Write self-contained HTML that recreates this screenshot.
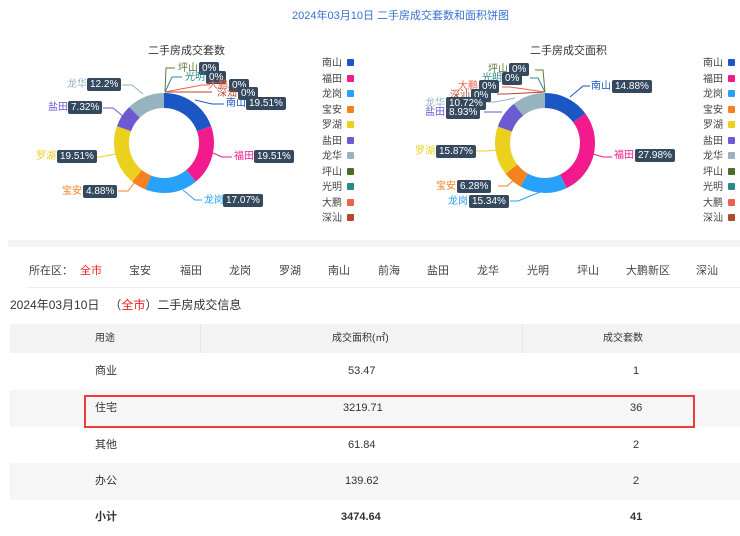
<!DOCTYPE html>
<html><head><meta charset="utf-8"><style>
*{margin:0;padding:0;box-sizing:border-box}
body{width:740px;height:527px;overflow:hidden;background:#fff;font-family:"Liberation Sans","Noto Sans CJK SC",sans-serif;position:relative;color:#333}
.a{position:absolute;white-space:nowrap}
.t{font-size:10px}
.b{position:absolute;background:#34495e;color:#fff;font-size:10px;line-height:13px;padding:0 3px;border-radius:2px;white-space:nowrap}
.l{position:absolute;font-size:10px;line-height:13px;white-space:nowrap}
.lg{position:absolute;font-size:10px;color:#444;line-height:12px}
.lg span{display:inline-block;width:7px;height:7px;border-radius:1px;margin-left:5px;vertical-align:0}
.row{position:absolute;left:10px;width:730px;height:37px;font-size:11px;line-height:37px;color:#333}
.row div{position:absolute;top:0}
</style></head><body>
<div class="a" style="left:292px;top:7px;font-size:11px;color:#3a6fd0">2024年03月10日 二手房成交套数和面积饼图</div>
<div class="a" style="left:148px;top:42px;font-size:11px;color:#333">二手房成交套数</div>
<div class="a" style="left:530px;top:42px;font-size:11px;color:#333">二手房成交面积</div>

<svg class="a" style="left:0;top:0" width="740" height="240">
<g transform="translate(164,143) rotate(-90)" fill="none" stroke-width="15">
<circle r="42.5" pathLength="100" stroke="#1a56c4" stroke-dasharray="19.51 100" stroke-dashoffset="0"/>
<circle r="42.5" pathLength="100" stroke="#f21a8c" stroke-dasharray="19.51 100" stroke-dashoffset="-19.51"/>
<circle r="42.5" pathLength="100" stroke="#27a1fa" stroke-dasharray="17.07 100" stroke-dashoffset="-39.02"/>
<circle r="42.5" pathLength="100" stroke="#f5821f" stroke-dasharray="4.88 100" stroke-dashoffset="-56.09"/>
<circle r="42.5" pathLength="100" stroke="#ecd01e" stroke-dasharray="19.51 100" stroke-dashoffset="-60.97"/>
<circle r="42.5" pathLength="100" stroke="#6c5bd0" stroke-dasharray="7.32 100" stroke-dashoffset="-80.48"/>
<circle r="42.5" pathLength="100" stroke="#97b3bf" stroke-dasharray="12.2 100" stroke-dashoffset="-87.8"/>
</g>
<g transform="translate(175,143) rotate(-90)" fill="none" stroke-width="15">
</g>
<g transform="translate(545,143) rotate(-90)" fill="none" stroke-width="15">
<circle r="42.5" pathLength="100" stroke="#1a56c4" stroke-dasharray="14.88 100" stroke-dashoffset="0"/>
<circle r="42.5" pathLength="100" stroke="#f21a8c" stroke-dasharray="27.98 100" stroke-dashoffset="-14.88"/>
<circle r="42.5" pathLength="100" stroke="#27a1fa" stroke-dasharray="15.34 100" stroke-dashoffset="-42.86"/>
<circle r="42.5" pathLength="100" stroke="#f5821f" stroke-dasharray="6.28 100" stroke-dashoffset="-58.2"/>
<circle r="42.5" pathLength="100" stroke="#ecd01e" stroke-dasharray="15.87 100" stroke-dashoffset="-64.48"/>
<circle r="42.5" pathLength="100" stroke="#6c5bd0" stroke-dasharray="8.93 100" stroke-dashoffset="-80.35"/>
<circle r="42.5" pathLength="100" stroke="#97b3bf" stroke-dasharray="10.72 100" stroke-dashoffset="-89.28"/>
</g>
<g fill="none" stroke-width="1">
<polyline points="195,100 212,104 224,104" stroke="#1a56c4"/>
<polyline points="213,153 222,157 232,157" stroke="#f21a8c"/>
<polyline points="183,190 195,200 202,200" stroke="#27a1fa"/>
<polyline points="138,178 128,191 118,191" stroke="#f5821f"/>
<polyline points="116,154 100,157 90,157" stroke="#ecd01e"/>
<polyline points="124,117 113,108 103,108" stroke="#6c5bd0"/>
<polyline points="143,94 132,85 122,85" stroke="#97b3bf"/>
<polyline points="165,92 166,68 175,68" stroke="#5d7a3a"/>
<polyline points="165,92 172,77 182,77" stroke="#2a8a8a"/>
<polyline points="165,92 202,85 210,85" stroke="#f0604d"/>
<polyline points="165,92 205,92 212,92" stroke="#b34a2c"/>
<polyline points="570,97 583,86 590,86" stroke="#1a56c4"/>
<polyline points="590,153 603,157 612,157" stroke="#f21a8c"/>
<polyline points="545,190 518,201 510,201" stroke="#27a1fa"/>
<polyline points="517,177 507,186 498,186" stroke="#f5821f"/>
<polyline points="497,150 485,151 476,151" stroke="#ecd01e"/>
<polyline points="502,112 490,112 484,112" stroke="#6c5bd0"/>
<polyline points="515,98 495,102 482,102" stroke="#97b3bf"/>
<polyline points="545,92 543,70 535,70" stroke="#5d7a3a"/>
<polyline points="545,92 538,78 530,78" stroke="#2a8a8a"/>
<polyline points="545,92 510,87 502,87" stroke="#f0604d"/>
<polyline points="545,92 505,94 497,94" stroke="#b34a2c"/>
</g>
</svg>

<!-- left labels -->
<div class="l" style="left:178px;top:62px;color:#5d7a3a">坪山</div><div class="b" style="left:199px;top:62px">0%</div>
<div class="l" style="left:185px;top:71px;color:#2a8a8a">光明</div><div class="b" style="left:206px;top:71px">0%</div>
<div class="l" style="left:208px;top:79px;color:#f0604d">大鹏</div><div class="b" style="left:229px;top:79px">0%</div>
<div class="l" style="left:217px;top:87px;color:#b34a2c">深汕</div><div class="b" style="left:238px;top:87px">0%</div>
<div class="l" style="left:226px;top:97px;color:#1a56c4">南山</div><div class="b" style="left:246px;top:97px">19.51%</div>
<div class="l" style="left:234px;top:150px;color:#f21a8c">福田</div><div class="b" style="left:254px;top:150px">19.51%</div>
<div class="l" style="left:204px;top:194px;color:#27a1fa">龙岗</div><div class="b" style="left:223px;top:194px">17.07%</div>
<div class="l" style="left:62px;top:185px;color:#f5821f">宝安</div><div class="b" style="left:83px;top:185px">4.88%</div>
<div class="l" style="left:36px;top:150px;color:#ecd01e">罗湖</div><div class="b" style="left:57px;top:150px">19.51%</div>
<div class="l" style="left:48px;top:101px;color:#6c5bd0">盐田</div><div class="b" style="left:68px;top:101px">7.32%</div>
<div class="l" style="left:67px;top:78px;color:#97b3bf">龙华</div><div class="b" style="left:87px;top:78px">12.2%</div>

<!-- right labels -->
<div class="l" style="left:488px;top:63px;color:#5d7a3a">坪山</div><div class="b" style="left:509px;top:63px">0%</div>
<div class="l" style="left:482px;top:72px;color:#2a8a8a">光明</div><div class="b" style="left:502px;top:72px">0%</div>
<div class="l" style="left:458px;top:80px;color:#f0604d">大鹏</div><div class="b" style="left:479px;top:80px">0%</div>
<div class="l" style="left:450px;top:89px;color:#b34a2c">深汕</div><div class="b" style="left:471px;top:89px">0%</div>
<div class="l" style="left:425px;top:97px;color:#97b3bf">龙华</div><div class="b" style="left:446px;top:97px">10.72%</div>
<div class="l" style="left:425px;top:106px;color:#6c5bd0">盐田</div><div class="b" style="left:446px;top:106px">8.93%</div>
<div class="l" style="left:591px;top:80px;color:#1a56c4">南山</div><div class="b" style="left:612px;top:80px">14.88%</div>
<div class="l" style="left:614px;top:149px;color:#f21a8c">福田</div><div class="b" style="left:635px;top:149px">27.98%</div>
<div class="l" style="left:448px;top:195px;color:#27a1fa">龙岗</div><div class="b" style="left:469px;top:195px">15.34%</div>
<div class="l" style="left:436px;top:180px;color:#f5821f">宝安</div><div class="b" style="left:457px;top:180px">6.28%</div>
<div class="l" style="left:415px;top:145px;color:#ecd01e">罗湖</div><div class="b" style="left:436px;top:145px">15.87%</div>

<!-- legends -->
<div class="lg" style="left:322px;top:56px;line-height:15.5px">南山<span style="background:#1a56c4"></span><br>福田<span style="background:#f21a8c"></span><br>龙岗<span style="background:#27a1fa"></span><br>宝安<span style="background:#f5821f"></span><br>罗湖<span style="background:#ecd01e"></span><br>盐田<span style="background:#6c5bd0"></span><br>龙华<span style="background:#97b3bf"></span><br>坪山<span style="background:#4e6b2e"></span><br>光明<span style="background:#2a8a8a"></span><br>大鹏<span style="background:#f0604d"></span><br>深汕<span style="background:#b34a2c"></span></div>
<div class="lg" style="left:703px;top:56px;line-height:15.5px">南山<span style="background:#1a56c4"></span><br>福田<span style="background:#f21a8c"></span><br>龙岗<span style="background:#27a1fa"></span><br>宝安<span style="background:#f5821f"></span><br>罗湖<span style="background:#ecd01e"></span><br>盐田<span style="background:#6c5bd0"></span><br>龙华<span style="background:#97b3bf"></span><br>坪山<span style="background:#4e6b2e"></span><br>光明<span style="background:#2a8a8a"></span><br>大鹏<span style="background:#f0604d"></span><br>深汕<span style="background:#b34a2c"></span></div>

<div class="a" style="left:8px;top:240px;width:732px;height:7px;background:#f4f4f4"></div>
<div class="a" style="top:262px;left:0;font-size:11px;color:#444;width:740px;height:14px">
<span class="a" style="left:29px">所在区：</span><span class="a" style="left:80px;color:#f02020">全市</span>
<span class="a" style="left:129px">宝安</span><span class="a" style="left:180px">福田</span><span class="a" style="left:229px">龙岗</span><span class="a" style="left:279px">罗湖</span><span class="a" style="left:328px">南山</span><span class="a" style="left:378px">前海</span><span class="a" style="left:427px">盐田</span><span class="a" style="left:477px">龙华</span><span class="a" style="left:527px">光明</span><span class="a" style="left:577px">坪山</span><span class="a" style="left:626px">大鹏新区</span><span class="a" style="left:696px">深汕</span>
</div>
<div class="a" style="left:26px;top:287px;width:714px;height:1px;background:#eee"></div>
<div class="a" style="left:10px;top:296px;font-size:12px;color:#333">2024年03月10日 &nbsp;&nbsp;（<span style="color:#f02020">全市</span>）二手房成交信息</div>

<div class="row" style="top:324px;height:29px;line-height:29px;background:#f3f3f3;font-size:10px"><div style="left:85px">用途</div><div style="left:0;width:522px;text-align:center;left:0">&nbsp;</div><div style="left:322px">成交面积(㎡)</div><div style="left:593px">成交套数</div>
<div style="left:190px;width:1px;height:29px;background:#e6e6e6"></div><div style="left:512px;width:1px;height:29px;background:#e6e6e6"></div></div>
<div class="row" style="top:353px"><div style="left:85px">商业</div><div style="left:338px">53.47</div><div style="left:623px">1</div></div>
<div class="row" style="top:390px;background:#f6f6f6"><div style="left:85px">住宅</div><div style="left:333px">3219.71</div><div style="left:620px">36</div></div>
<div class="row" style="top:427px"><div style="left:85px">其他</div><div style="left:338px">61.84</div><div style="left:623px">2</div></div>
<div class="row" style="top:463px;background:#f6f6f6"><div style="left:85px">办公</div><div style="left:335px">139.62</div><div style="left:623px">2</div></div>
<div class="row" style="top:499px;font-weight:bold"><div style="left:85px">小计</div><div style="left:331px">3474.64</div><div style="left:620px">41</div></div>
<div class="a" style="left:84px;top:395px;width:611px;height:33px;border:2px solid #ee3b3b"></div>
</body></html>
